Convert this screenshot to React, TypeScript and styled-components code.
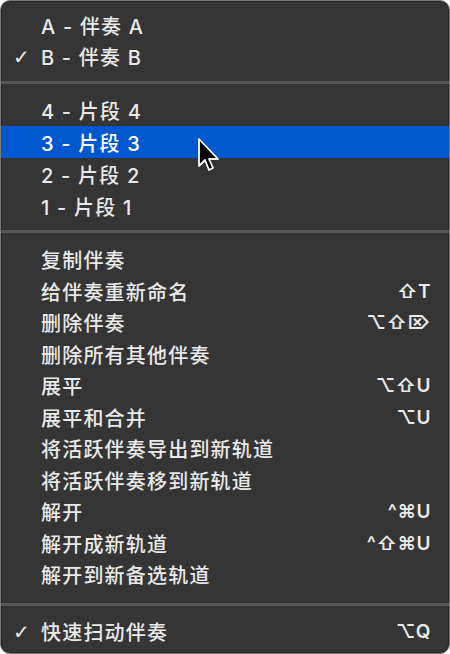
import React from 'react';
import styled, {createGlobalStyle} from 'styled-components';

const GlobalStyle = createGlobalStyle`
    html, body {
        margin: 0;
        padding: 0;
        background: #ffffff;
    }
`;

interface MenuEntry {
    label: string;
    shortcut?: string;
    checked?: boolean;
    active?: boolean;
}

const groups: { rowHeight: number; items: MenuEntry[] }[] = [
    {
        rowHeight: 31,
        items: [
            {label: 'A - 伴奏 A'},
            {label: 'B - 伴奏 B', checked: true},
        ],
    },
    {
        rowHeight: 32,
        items: [
            {label: '4 - 片段 4'},
            {label: '3 - 片段 3', active: true},
            {label: '2 - 片段 2'},
            {label: '1 - 片段 1'},
        ],
    },
    {
        rowHeight: 31.5,
        items: [
            {label: '复制伴奏'},
            {label: '给伴奏重新命名', shortcut: '⇧T'},
            {label: '删除伴奏', shortcut: '⌥⇧⌦'},
            {label: '删除所有其他伴奏'},
            {label: '展平', shortcut: '⌥⇧U'},
            {label: '展平和合并', shortcut: '⌥U'},
            {label: '将活跃伴奏导出到新轨道'},
            {label: '将活跃伴奏移到新轨道'},
            {label: '解开', shortcut: '^⌘U'},
            {label: '解开成新轨道', shortcut: '^⇧⌘U'},
            {label: '解开到新备选轨道'},
        ],
    },
    {
        rowHeight: 32,
        items: [
            {label: '快速扫动伴奏', shortcut: '⌥Q', checked: true},
        ],
    },
];

/* Whole menu panel */
const Menu = styled.div`
    position: relative;
    box-sizing: border-box;
    width: 450px;
    height: 654px;
    padding: 9px 0 5px;
    background: #353535;
    border: 1px solid #7a7a7a;
    border-radius: 10px;
    box-shadow: inset 0 0 0 1px #242424;
    overflow: hidden;
    font-family: "Inter", "Noto Sans CJK SC", sans-serif;
    font-weight: 500;
    font-size: 20px;
    color: #e9e9e9;
    display: flex;
    flex-direction: column;
`;

const Group = styled.div`
    display: flex;
    flex-direction: column;
`;

const Separator = styled.div<{ $before: number; $after: number }>`
    flex: none;
    height: 3px;
    margin: ${({$before}) => $before}px 0 ${({$after}) => $after}px;
    background: #565656;
`;

const Row = styled.div<{ $h: number; $active?: boolean }>`
    flex: none;
    height: ${({$h}) => $h}px;
    display: flex;
    align-items: center;
    padding: 0 18px 0 12px;
    background: ${({$active}) => ($active ? '#0058d0' : 'transparent')};
    color: ${({$active}) => ($active ? '#ffffff' : '#e9e9e9')};
    white-space: nowrap;
`;

const Check = styled.span`
    width: 28px;
    flex: none;
    font-family: "DejaVu Sans", sans-serif;
    font-size: 20px;
`;

const Label = styled.span`
    flex: 1;
    letter-spacing: 1.2px;
`;

const Shortcut = styled.span`
    font-family: "Inter", "DejaVu Sans", sans-serif;
    font-weight: 600;
    font-size: 19px;
    letter-spacing: 0.5px;
`;

/* Mouse pointer over the highlighted row */
const Pointer = styled.svg`
    position: absolute;
    left: 196px;
    top: 136px;
    pointer-events: none;
`;

const separatorGaps = [
    {before: 9, after: 10},
    {before: 8, after: 11},
    {before: 12, after: 10},
];

const App: React.FC = () => {
    return (
        <>
            <GlobalStyle/>
            <Menu>
                {groups.map((group, gi) => (
                    <React.Fragment key={gi}>
                        {gi > 0 && (
                            <Separator
                                $before={separatorGaps[gi - 1].before}
                                $after={separatorGaps[gi - 1].after}
                            />
                        )}
                        <Group>
                            {group.items.map((item) => (
                                <Row key={item.label} $h={group.rowHeight} $active={item.active}>
                                    <Check>{item.checked ? '✓' : ''}</Check>
                                    <Label>{item.label}</Label>
                                    {item.shortcut && <Shortcut>{item.shortcut}</Shortcut>}
                                </Row>
                            ))}
                        </Group>
                    </React.Fragment>
                ))}
                <Pointer width="26" height="38" viewBox="-2 -2 26 38">
                    <polygon
                        points="0,0 0,27 6,21 10,31 14,29 10,20 19,20"
                        fill="#000000"
                        stroke="#ffffff"
                        strokeWidth="1.8"
                        strokeLinejoin="round"
                    />
                </Pointer>
            </Menu>
        </>
    );
};

export default App;
